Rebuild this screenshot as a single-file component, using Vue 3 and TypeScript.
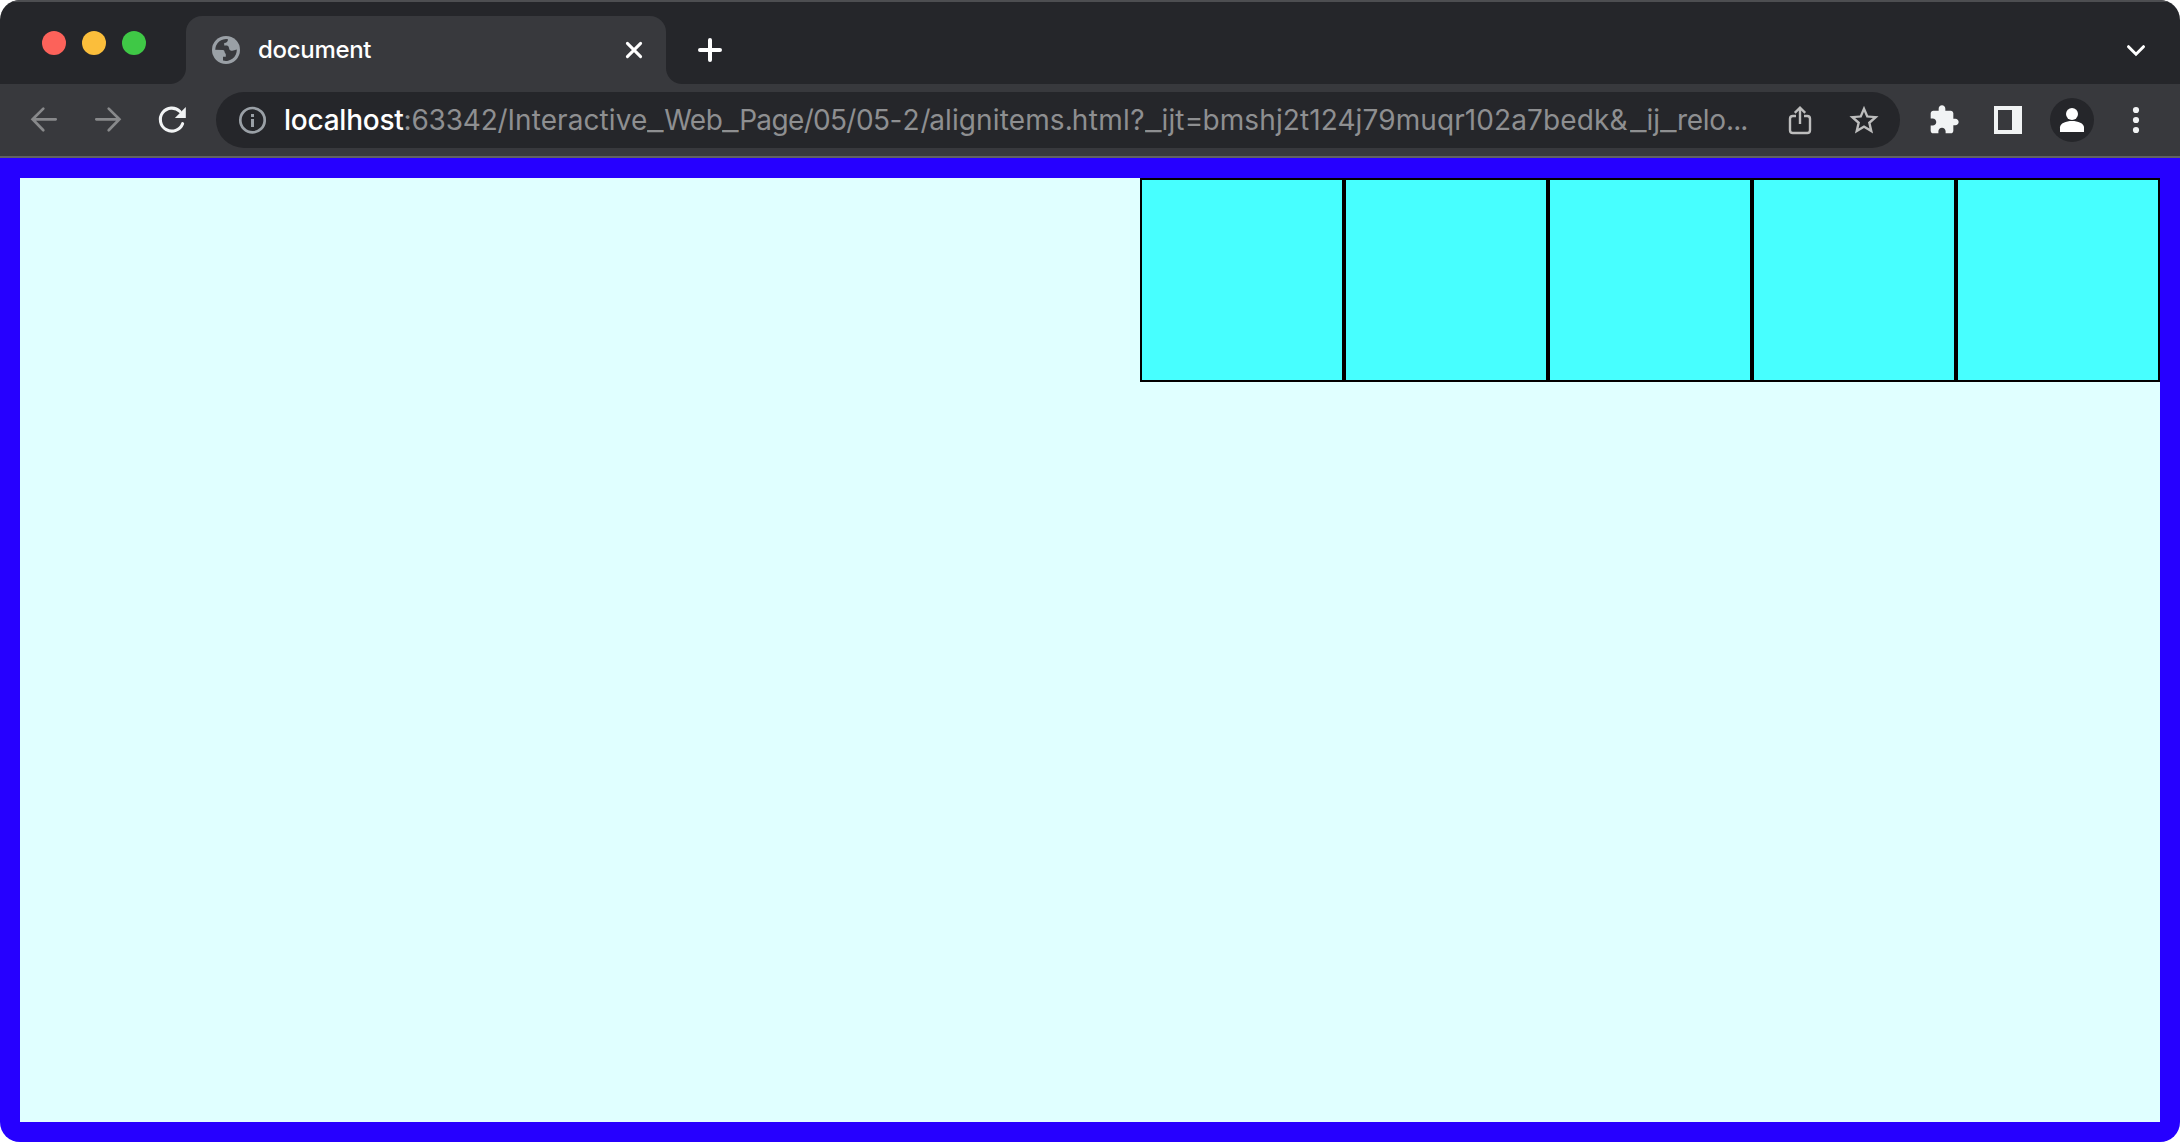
<script setup lang="ts">
interface Segment {
  text: string
  spacing: number
}

const boxes: number[] = [1, 2, 3, 4, 5]
const host = 'localhost'

// Address path split into runs, each with its own tracking in pixels.
const segments: Segment[] = [
  { text: ':63342/', spacing: -0.2 },
  { text: 'Interactive', spacing: 0.09 },
  { text: '_', spacing: 0 },
  { text: 'Web', spacing: -0.5 },
  { text: '_', spacing: 0 },
  { text: 'Page', spacing: -0.65 },
  { text: '/05', spacing: -0.7 },
  { text: '/05', spacing: -0.5 },
  { text: '-2', spacing: 0.9 },
  { text: '/', spacing: -1.4 },
  { text: 'alignitems', spacing: 0.13 },
  { text: '.', spacing: -0.95 },
  { text: 'html', spacing: 0.34 },
  { text: '?', spacing: 0.1 },
  { text: '_', spacing: 0 },
  { text: 'ijt', spacing: 0.15 },
  { text: '=', spacing: -0.7 },
  { text: 'bmshj2t124j79muqr102a7bedk', spacing: 0.1 },
  { text: '&', spacing: 2.2 },
  { text: '_', spacing: 0 },
  { text: 'ij', spacing: 0.1 },
  { text: '_', spacing: 0 },
  { text: 'relo', spacing: -0.25 },
  { text: '...', spacing: -0.85 },
]
</script>

<template>
  <div class="window">
    <header class="tabstrip">
      <div class="lights">
        <i class="light red"></i>
        <i class="light yellow"></i>
        <i class="light green"></i>
      </div>
      <div class="tab">
        <svg class="globe" width="28" height="28" viewBox="0 0 28 28">
          <circle cx="14" cy="14" r="14" fill="#9aa0a6" />
          <path d="M16 3.2C16 5.6 14.6 6.8 12.200 7V9.600H14.800C17 9.800 16.800 12 17.400 13.400C18.500 15 21 15 24.800 13.600A10.900 10.900 0 0 1 11 24.600V20.800H13.800V17.800C12.200 17 13 14.200 11 14L3.200 13.800A10.900 10.900 0 0 1 16 3.200Z" fill="#38393d" />
        </svg>
        <span class="title">document</span>
        <svg class="close" width="20" height="20" viewBox="0 0 20 20">
          <path d="M3.4 3.4L16.6 16.6M16.6 3.4L3.4 16.6" stroke="#fff" stroke-width="3" stroke-linecap="round" />
        </svg>
      </div>
      <svg class="plus" width="24" height="24" viewBox="0 0 24 24">
        <path d="M12 2V22M2 12H22" stroke="#fff" stroke-width="4" stroke-linecap="round" />
      </svg>
      <svg class="chevron" width="20" height="14" viewBox="0 0 20 14">
        <path d="M2.5 2.7L10 10.2L17.5 2.7" fill="none" stroke="#fff" stroke-width="3" stroke-linecap="round" />
      </svg>
    </header>

    <div class="toolbar">
      <svg class="back" width="32" height="32" viewBox="0 0 32 32">
        <path d="M27.700 15.300H4.700M15.300 4.600L4.600 15.300L15.300 26.200" fill="none" stroke="#88898b" stroke-width="2.700" stroke-linecap="round" />
      </svg>
      <svg class="forward" width="32" height="32" viewBox="0 0 32 32">
        <path d="M4.300 15.300H27.300M16.700 4.600L27.400 15.300L16.700 26.200" fill="none" stroke="#88898b" stroke-width="2.700" stroke-linecap="round" />
      </svg>
      <svg class="reload" width="32" height="32" viewBox="0 0 32 32">
        <path d="M26.600 19.700A11.500 11.500 0 1 1 24 7.500" fill="none" stroke="#f1f3f4" stroke-width="3.100" stroke-linecap="round" />
        <path d="M29.800 3V14H18.900Z" fill="#f1f3f4" />
      </svg>
      <div class="omnibox">
        <svg class="info" width="28" height="28" viewBox="0 0 28 28">
          <circle cx="14.500" cy="14.200" r="12.200" fill="none" stroke="#9aa0a6" stroke-width="2.700" />
          <path d="M13 8H16V11H13ZM13 13H16V21H13Z" fill="#9aa0a6" />
        </svg>
        <div class="url"><span class="host">{{ host }}</span><span
            v-for="(segment, i) in segments"
            :key="i"
            class="path"
            :class="{ underscore: segment.text === '_' }"
            :style="{ letterSpacing: segment.spacing + 'px' }"
          >{{ segment.text }}</span></div>
        <svg class="share" width="24" height="32" viewBox="0 0 24 32">
          <path d="M8 12H4.8Q2 12 2 14.8V26.2Q2 29 4.8 29H19.2Q22 29 22 26.2V14.8Q22 12 19.2 12H16M12 20V4.5M6.8 8.8L12 3.7L17.2 8.8" fill="none" stroke="#bdbdbd" stroke-width="2.4" />
        </svg>
        <svg class="star" width="32" height="32" viewBox="0 0 24 24">
          <path d="M22.9 9.24l-7.8-.67L12 1.3 8.9 8.58 1.1 9.24l5.9 5.13L5.2 22.1 12 18l6.8 4.1-1.8-7.73zM12 15.9l-4.1 2.48 1.1-4.66-3.65-3.15 4.8-.42L12 5.8l1.85 4.36 4.8.42-3.65 3.15 1.1 4.66z" fill="#bdbdbd" />
        </svg>
      </div>
      <svg class="puzzle" width="32" height="32" viewBox="0 0 24 24">
        <path d="M20.5 11H19V7c0-1.1-.9-2-2-2h-4V3.5C13 2.12 11.88 1 10.5 1S8 2.12 8 3.5V5H4c-1.1 0-1.99.9-1.99 2v3.8H3.5c1.49 0 2.7 1.21 2.7 2.7s-1.21 2.7-2.7 2.7H2V20c0 1.1.9 2 2 2h3.8v-1.5c0-1.49 1.21-2.7 2.7-2.7 1.49 0 2.7 1.21 2.7 2.7V22H17c1.1 0 2-.9 2-2v-4h1.5c1.38 0 2.5-1.12 2.5-2.5S21.88 11 20.5 11z" fill="#f1f3f4" />
      </svg>
      <svg class="panel" width="28" height="28" viewBox="0 0 28 28">
        <path d="M0 0H28V28H0ZM4 4V24H18V4Z" fill="#f1f3f4" fill-rule="evenodd" />
      </svg>
      <svg class="avatar" width="44" height="44" viewBox="0 0 44 44">
        <circle cx="22" cy="22" r="22" fill="#25262a" />
        <circle cx="22" cy="16" r="6" fill="#fff" />
        <path d="M10 34V29.500C10 25.200 16 23 22 23S34 25.200 34 29.500V34Z" fill="#fff" />
      </svg>
      <svg class="menu" width="8" height="28" viewBox="0 0 8 28">
        <g fill="#f1f3f4">
          <circle cx="4" cy="4" r="3.1" />
          <circle cx="4" cy="14" r="3.1" />
          <circle cx="4" cy="24" r="3.1" />
        </g>
      </svg>
    </div>

    <main class="container">
      <div v-for="n in boxes" :key="n" class="box"></div>
    </main>
  </div>
</template>

<style>
body {
  margin: 0;
  background: #fff;
}
</style>

<style scoped>
.window {
  width: 2180px;
  height: 1142px;
  display: flex;
  flex-direction: column;
  overflow: hidden;
  border-radius: 20px;
  font-family: Inter, "Liberation Sans", sans-serif;
}
svg {
  display: block;
  flex: none;
}
.tabstrip {
  box-sizing: border-box;
  height: 84px;
  flex: none;
  display: flex;
  align-items: flex-start;
  background: #25262a;
  border-top: 2px solid #4d4e51;
}
.lights {
  display: flex;
  gap: 16px;
  margin: 29px 40px 0 42px;
}
.light {
  width: 24px;
  height: 24px;
  border-radius: 50%;
}
.red { background: #fc625a; }
.yellow { background: #fbbe3b; }
.green { background: #3fc846; }
.tab {
  position: relative;
  box-sizing: border-box;
  width: 480px;
  height: 68px;
  margin-top: 14px;
  padding: 0 22px 0 26px;
  display: flex;
  align-items: center;
  background: #38393d;
  border-radius: 16px 16px 0 0;
}
.tab::before,
.tab::after {
  content: "";
  position: absolute;
  bottom: 0;
  width: 16px;
  height: 16px;
}
.tab::before {
  left: -16px;
  background: radial-gradient(circle at 0 0, transparent 15.5px, #38393d 16.5px);
}
.tab::after {
  right: -16px;
  background: radial-gradient(circle at 100% 0, transparent 15.5px, #38393d 16.5px);
}
.title {
  flex: 1;
  margin-left: 18px;
  color: #fff;
  font-size: 24px;
  font-weight: 500;
  letter-spacing: -0.3px;
  line-height: 32px;
  white-space: nowrap;
}
.plus {
  margin: 36px 0 0 32px;
}
.chevron {
  margin: 42px 34px 0 auto;
}
.toolbar {
  box-sizing: border-box;
  height: 74px;
  flex: none;
  display: flex;
  align-items: center;
  padding-left: 28px;
  background: #38393d;
  border-bottom: 2px solid #616163;
}
.forward { margin-left: 32px; }
.reload { margin-left: 32px; }
.omnibox {
  box-sizing: border-box;
  width: 1684px;
  height: 56px;
  margin-left: 28px;
  padding: 0 20px 0 22px;
  display: flex;
  align-items: center;
  border-radius: 28px;
  background: #25262a;
}
.url {
  flex: 1;
  margin-left: 18px;
  font-size: 28px;
  line-height: 40px;
  white-space: nowrap;
}
.host {
  color: #fff;
  font-weight: 500;
  letter-spacing: -0.24px;
}
.path { color: #8e8f91; }
.underscore {
  display: inline-block;
  margin: 0 2px;
  transform: scaleX(1.3);
}
.star { margin-left: 36px; }
.puzzle { margin-left: 28px; }
.panel { margin-left: 34px; }
.avatar { margin-left: 28px; }
.menu { margin-left: 38px; }
.container {
  box-sizing: border-box;
  flex: 1;
  display: flex;
  justify-content: flex-end;
  align-items: flex-start;
  border: 20px solid #2600ff;
  background: #e0ffff;
}
.box {
  width: 200px;
  height: 200px;
  border: 2px solid #000;
  background: #47ffff;
}
</style>
